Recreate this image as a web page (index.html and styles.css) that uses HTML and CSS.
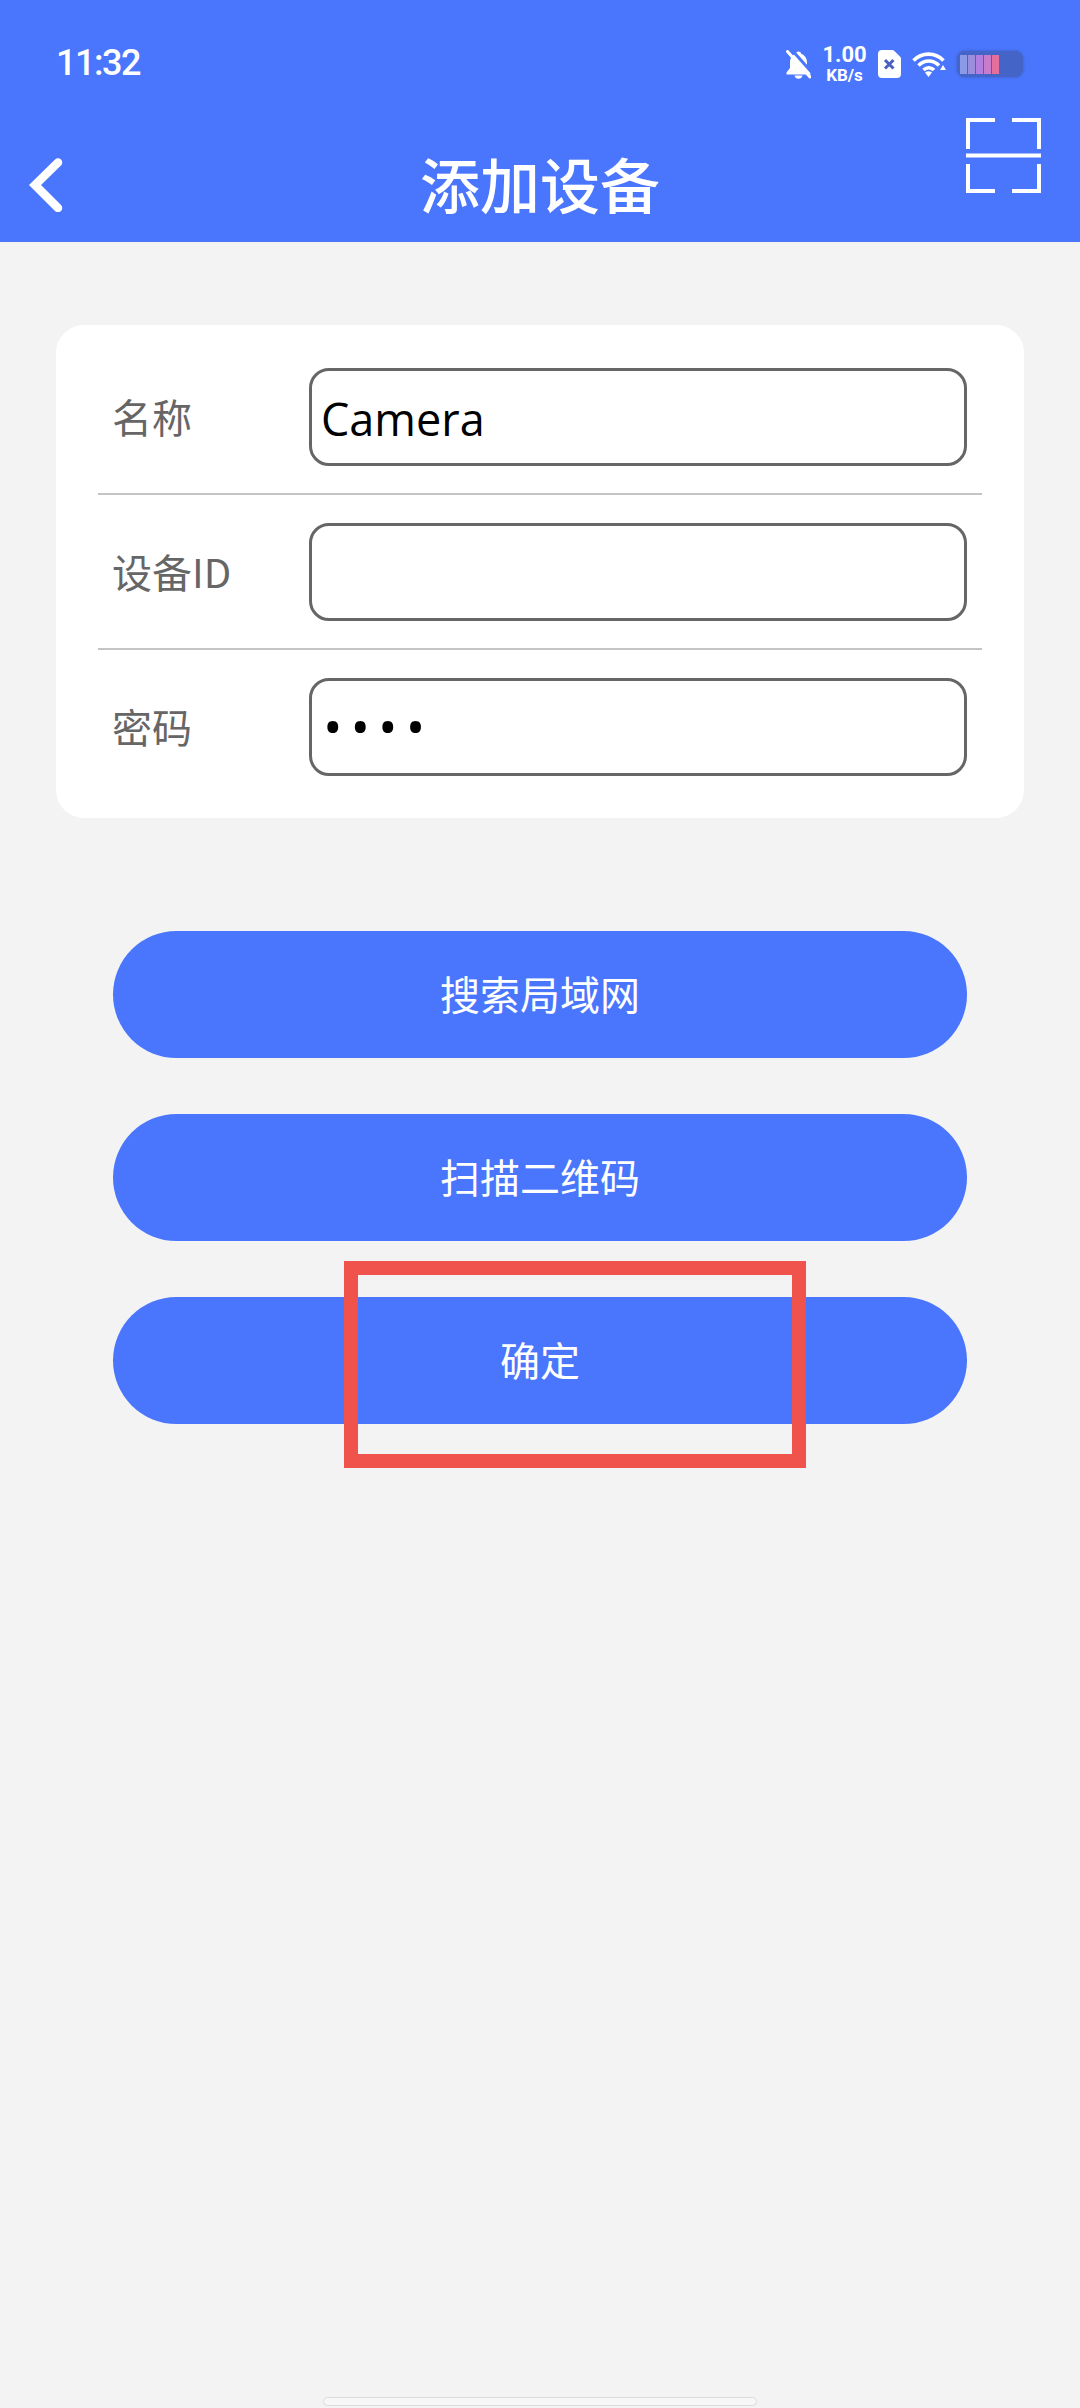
FILE: index.html
```html
<!DOCTYPE html>
<html lang="zh-CN">
<head>
<meta charset="utf-8">
<title>添加设备</title>
<link rel="stylesheet" href="styles.css">
</head>
<body>
<div class="page">
  <header class="header">
    <div class="status">
      <span class="time">11:32</span>
      <div class="status-icons">
        <svg class="ic-bell" viewBox="0 0 25 29"><path fill="#fff" d="M12.500 1.500c-1.500 0-2.400.9-2.600 2.300C6.300 5 4 8.300 4 12.500v5.500L.5 22.500v2h24v-2L21 18v-5.500c0-4.200-2.300-7.500-5.900-8.700-.2-1.400-1.100-2.300-2.600-2.300zM8.500 25.500c.4 2 2 3.300 4 3.300s3.600-1.300 4-3.300z"/><path stroke="#4a76fd" stroke-width="3" d="M5 -1L29 26"/><path stroke="#fff" stroke-width="3" stroke-linecap="round" d="M1.500 1.500L24 27"/></svg>
        <div class="speed"><span class="speed-val">1.00</span><span class="speed-unit">KB/s</span></div>
        <svg class="ic-sim" viewBox="0 0 23 28"><path fill="#fff" d="M4 0h10.500a2 2 0 0 1 1.400.6L22.400 7a2 2 0 0 1 .6 1.400V24a4 4 0 0 1-4 4H4a4 4 0 0 1-4-4V4a4 4 0 0 1 4-4z"/><path stroke="#4a5fc0" stroke-width="3" d="M7 10l8.500 8.500M15.500 10L7 18.500"/></svg>
        <svg class="ic-wifi" viewBox="0 0 34 26"><g fill="none" stroke="#fff" stroke-width="3.600"><path d="M1.500 9.500C10 1 23 1 31.500 9.500"/><path d="M6.500 14.500C12.500 8.500 21 8.500 27 14.500"/><path d="M11.500 19C14.500 16 19 16 22 19"/></g><path fill="#fff" d="M13 21.500q3.500-2.400 7 0L16.500 26zM28 19l3-5 3 5z"/></svg>
        <div class="battery">
          <i class="cell cell-1"></i><i class="cell cell-2"></i><i class="cell cell-3"></i><i class="cell cell-4"></i><i class="cell cell-5"></i>
        </div>
      </div>
    </div>
    <nav class="nav">
      <svg class="ic-back" viewBox="0 0 34 54"><path fill="none" stroke="#fff" stroke-width="8.500" stroke-linecap="round" stroke-linejoin="miter" d="M29 4.500L6 27l23 23"/></svg>
      <h1 class="title">添加设备</h1>
      <svg class="ic-scan" viewBox="0 0 75 75"><path fill="none" stroke="#fff" stroke-width="4" d="M29 2H2v29M46 2h27v29M0 37.500h75M29 73H2V46M46 73h27V46"/></svg>
    </nav>
  </header>

  <main class="content">
    <section class="card">
      <div class="row">
        <span class="label">名称</span>
        <div class="field">Camera</div>
      </div>
      <div class="row">
        <span class="label">设备ID</span>
        <div class="field"></div>
      </div>
      <div class="row">
        <span class="label">密码</span>
        <div class="field field-pass">••••</div>
      </div>
    </section>

    <div class="actions">
      <button class="btn">搜索局域网</button>
      <button class="btn">扫描二维码</button>
      <div class="btn-wrap">
        <button class="btn">确定</button>
        <div class="highlight"></div>
      </div>
    </div>
  </main>

  <div class="home-bar"></div>
</div>
</body>
</html>
```

FILE: styles.css
```css
* { box-sizing: border-box; }
html, body { margin: 0; padding: 0; }
body {
  background: #f3f3f3;
  font-family: "Noto Sans CJK SC", "Noto Sans", sans-serif;
  overflow: hidden;
}
.page {
  width: 1080px;
  height: 2408px;
  display: flex;
  flex-direction: column;
}

/* header */
.header {
  height: 242px;
  background: #4a76fd;
  color: #fff;
  flex: none;
}
.status {
  height: 118px;
  padding: 44px 57px 0 56px;
  display: flex;
  justify-content: space-between;
  align-items: flex-start;
}
.time {
  font: 500 36px/38px Roboto, sans-serif;
  letter-spacing: -1.500px;
}
.status-icons {
  display: flex;
  align-items: center;
  height: 40px;
}
.ic-bell { width: 25px; height: 29px; margin-right: 12px; }
.speed {
  display: flex;
  flex-direction: column;
  align-items: center;
  width: 43px;
  margin-right: 12px;
  font-family: Roboto, sans-serif;
  font-weight: 700;
}
.speed-val { font-size: 22px; line-height: 22px; }
.speed-unit { font-size: 17px; line-height: 18px; }
.ic-sim { width: 23px; height: 28px; margin-right: 11px; }
.ic-wifi { width: 34px; height: 26px; margin-right: 11px; }
.battery {
  width: 66px;
  height: 26px;
  border-radius: 8px;
  background: #4464c8;
  box-shadow: 0 0 3px #3f5cb5;
  display: flex;
  align-items: center;
  gap: 1px;
  padding: 0 3px;
}
.cell { width: 7px; height: 19px; display: block; filter: blur(.5px); }
.cell-1 { background: #8a9ae6; }
.cell-2 { background: #9c8edf; }
.cell-3 { background: #b07fe0; }
.cell-4 { background: #c97cc9; }
.cell-5 { background: #e46f9a; }

.nav {
  height: 124px;
  display: grid;
  grid-template-columns: 1fr auto 1fr;
  padding: 0 39px 0 29px;
}
.ic-back {
  width: 34px;
  height: 54px;
  margin-top: 40px;
  justify-self: start;
}
.title {
  margin: 0 0 0 10px;
  font-size: 60px;
  line-height: 72px;
  font-weight: 500;
  padding-top: 29px;
}
.ic-scan {
  width: 75px;
  height: 75px;
  justify-self: end;
}

/* form card */
.content {
  padding: 83px 56px 0;
  display: flex;
  flex-direction: column;
}
.card {
  width: 968px;
  height: 493px;
  padding: 15px 42px 0;
  background: #fff;
  border-radius: 28px;
}
.row {
  display: flex;
  align-items: center;
  height: 155px;
  padding-left: 14px;
  padding-right: 15px;
  border-bottom: 2px solid #c4c4c4;
}
.row:last-child {
  height: 154px;
  border-bottom: 0;
}
.label {
  width: 197px;
  flex: none;
  color: #666;
  font-size: 40px;
  line-height: 50px;
  margin-bottom: 2px;
}
.field {
  width: 658px;
  height: 98px;
  border: 3px solid #666;
  border-radius: 20px;
  background: #fff;
  color: #000;
  padding-left: 9px;
  font: 45px/95px "Open Sans", sans-serif;
}
.field-pass {
  font-size: 52px;
  line-height: 90px;
  letter-spacing: 8px;
  padding-left: 11px;
}

/* buttons */
.actions {
  margin-top: 113px;
  padding: 0 57px;
  display: flex;
  flex-direction: column;
  gap: 56px;
}
.btn {
  display: block;
  width: 854px;
  height: 127px;
  border: 0;
  border-radius: 64px;
  background: #4a76fd;
  color: #fff;
  font-family: "Noto Sans CJK SC", sans-serif;
  font-size: 40px;
  padding: 0 0 4px;
}
.btn-wrap { position: relative; }
.highlight {
  position: absolute;
  left: 231px;
  top: -36px;
  width: 462px;
  height: 207px;
  border: 14px solid #f0524c;
}

.home-bar {
  width: 434px;
  height: 9px;
  margin: auto auto 2px;
  background: #f7f7f7;
  border: 1px solid #dcdcdc;
  border-radius: 5px;
}
```
